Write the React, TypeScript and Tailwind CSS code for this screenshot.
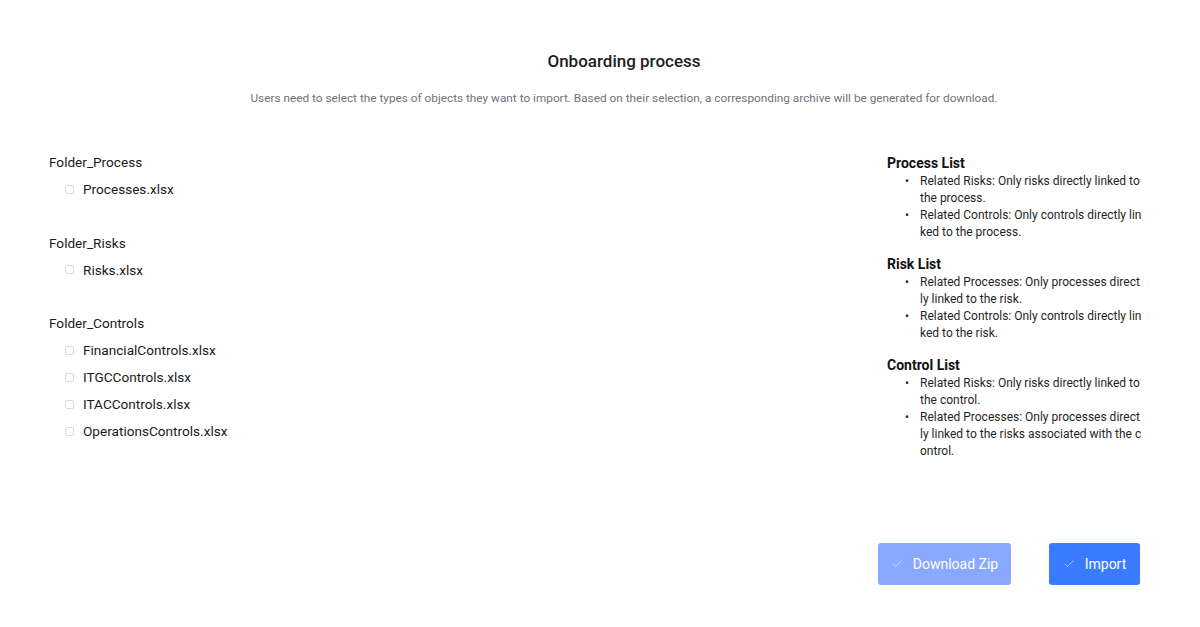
import { Check } from 'lucide-react'

interface FileGroup {
  folder: string
  files: string[]
}

const groups: FileGroup[] = [
  { folder: 'Folder_Process', files: ['Processes.xlsx'] },
  { folder: 'Folder_Risks', files: ['Risks.xlsx'] },
  {
    folder: 'Folder_Controls',
    files: ['FinancialControls.xlsx', 'ITGCControls.xlsx', 'ITACControls.xlsx', 'OperationsControls.xlsx'],
  },
]

const notes: { title: string; items: string[] }[] = [
  {
    title: 'Process List',
    items: [
      'Related Risks: Only risks directly linked to the process.',
      'Related Controls: Only controls directly linked to the process.',
    ],
  },
  {
    title: 'Risk List',
    items: [
      'Related Processes: Only processes directly linked to the risk.',
      'Related Controls: Only controls directly linked to the risk.',
    ],
  },
  {
    title: 'Control List',
    items: [
      'Related Risks: Only risks directly linked to the control.',
      'Related Processes: Only processes directly linked to the risks associated with the control.',
    ],
  },
]

export default function App() {
  return (
    <div className="w-[1200px] h-[627px] bg-white text-[#1f1f1f] font-['Roboto',sans-serif] flex flex-col">
      <div className="pl-[48px]">
        <h1 className="pt-[49px] text-center text-[17px] leading-[24px] font-medium text-[#1d1d1f]">
          Onboarding process
        </h1>
        <p className="mt-[16px] text-center text-[11.8px] leading-[18px] text-[#6f737a]">
          Users need to select the types of objects they want to import. Based on their selection, a corresponding
          archive will be generated for download.
        </p>
      </div>

      <div className="mt-[46px] flex justify-between pl-[49px] pr-[58px]">
        <div className="flex flex-col gap-[35.5px]">
          {groups.map((g) => (
            <div key={g.folder}>
              <div className="text-[13.6px] leading-[18px] text-[#1a1a1a]">{g.folder}</div>
              <div className="mt-[9px] flex flex-col gap-[9px] pl-[16px]">
                {g.files.map((f) => (
                  <label key={f} className="flex items-center gap-[9px] text-[13.6px] leading-[18px] text-[#1a1a1a]">
                    <span className="w-[9px] h-[9px] rounded-[2px] border border-[#d9dbe0] bg-white" />
                    {f}
                  </label>
                ))}
              </div>
            </div>
          ))}
        </div>

        <div className="mt-[2px] w-[255px] flex flex-col gap-[15px]">
          {notes.map((n) => (
            <div key={n.title}>
              <div className="text-[14px] leading-[17px] font-bold text-[#111]">{n.title}</div>
              <ul className="mt-[1px] pl-[33px] text-[12px] leading-[17px] text-[#1f1f1f] [word-break:break-all]">
                {n.items.map((it) => (
                  <li key={it} className="relative">
                    <span className="absolute left-[-15px] top-0">•</span>
                    {it}
                  </li>
                ))}
              </ul>
            </div>
          ))}
        </div>
      </div>

      <div className="mt-auto mb-[42px] flex justify-end gap-[38px] pr-[60px]">
        <button className="h-[42px] w-[133px] rounded-[3px] bg-[#88a9ff] text-white text-[14px] flex items-center justify-center gap-[10px]">
          <Check className="w-[12px] h-[12px] text-white/70" strokeWidth={1.5} />
          Download Zip
        </button>
        <button className="h-[42px] w-[91px] rounded-[3px] bg-[#3a7bff] text-white text-[14px] flex items-center justify-center gap-[10px]">
          <Check className="w-[12px] h-[12px] text-white/70" strokeWidth={1.5} />
          Import
        </button>
      </div>
    </div>
  )
}
